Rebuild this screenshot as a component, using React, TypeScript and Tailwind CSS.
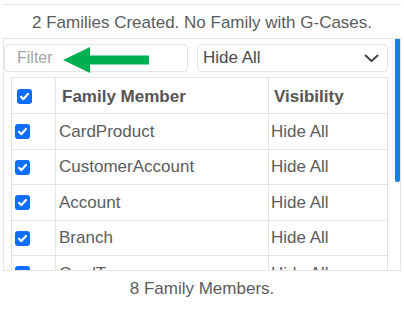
import React from 'react';

const members = ['CardProduct', 'CustomerAccount', 'Account', 'Branch', 'CardType', 'Customer'];

const Check: React.FC = () => (
  <span className="flex h-[15px] w-[15px] items-center justify-center rounded-[3px] bg-[#0d6efd]">
    <svg width="11" height="11" viewBox="0 0 11 11" fill="none">
      <path d="M2 5.8 L4.4 8.1 L9 3" stroke="white" strokeWidth="2.2" strokeLinecap="round" strokeLinejoin="round" />
    </svg>
  </span>
);

export default function App() {
  return (
    <div className="h-[310px] w-[404px] bg-white text-[17px] text-[#5c5c5c]" style={{ fontFamily: '"Liberation Sans", Arial, sans-serif' }}>
      <div className="pt-[4px]">
        <div className="mx-[3px] h-px bg-[#e2e2e2]" />
      </div>
      <div className="mt-[8px] text-center leading-[20px]">2 Families Created. No Family with G-Cases.</div>

      <div className="relative mx-[3px] mt-[5px] h-[233px] overflow-hidden border border-[#e6e6e6]">
        <div className="flex gap-[9px] pt-[5px]">
          <div className="flex h-[28px] w-[184px] items-center rounded-[4px] border border-[#e3e3e3] pl-[12px] text-[16px] text-[#a3a3a3]">
            Filter
          </div>
          <div className="flex h-[28px] w-[191px] items-center justify-between rounded-[4px] border border-[#e3e3e3] pl-[5px] pr-[8px] text-[17px] text-[#4a4a4a]">
            <span>Hide All</span>
            <svg width="15" height="9" viewBox="0 0 15 9" fill="none">
              <path d="M1.5 1.5 L7.5 7 L13.5 1.5" stroke="#444" strokeWidth="2" strokeLinecap="round" strokeLinejoin="round" />
            </svg>
          </div>
        </div>

        <div className="ml-[7px] mt-[5px] w-[377px] border-l border-r border-[#e3e3e3]">
          <div className="grid h-[36px] grid-cols-[43px_213px_121px] border-t border-[#e3e3e3] font-bold text-[#555]">
            <div className="flex items-center pl-[5px] pt-[1px]">
              <Check />
            </div>
            <div className="flex items-center border-l border-[#e3e3e3] pl-[6px] pt-[3px]">Family Member</div>
            <div className="flex items-center border-l border-[#e3e3e3] pl-[5px] pt-[3px]">Visibility</div>
          </div>
          {members.map((m, i) => (
            <div
              key={m}
              className={`grid grid-cols-[43px_213px_121px] border-t border-[#e3e3e3] ${i % 2 === 0 ? 'h-[36px]' : 'h-[35px]'}`}
            >
              <div className="flex items-center pl-[3px]">
                <Check />
              </div>
              <div className="flex items-center border-l border-[#e3e3e3] pl-[3px]">{m}</div>
              <div className="flex items-center border-l border-[#e3e3e3] pl-[2px]">Hide All</div>
            </div>
          ))}
        </div>

        <div className="absolute right-0 top-[-1px] h-[144px] w-[5px] rounded-[2px] bg-[#1a7fd8]" />

        <svg className="absolute left-[55px] top-[7px]" width="92" height="28" viewBox="0 0 92 28">
          <polygon points="4,14 31,1 31,9.5 90,9.5 90,18.5 31,18.5 31,27" fill="#00b050" />
        </svg>
      </div>

      <div className="mt-[8px] text-center leading-[20px]">8 Family Members.</div>
    </div>
  );
}
